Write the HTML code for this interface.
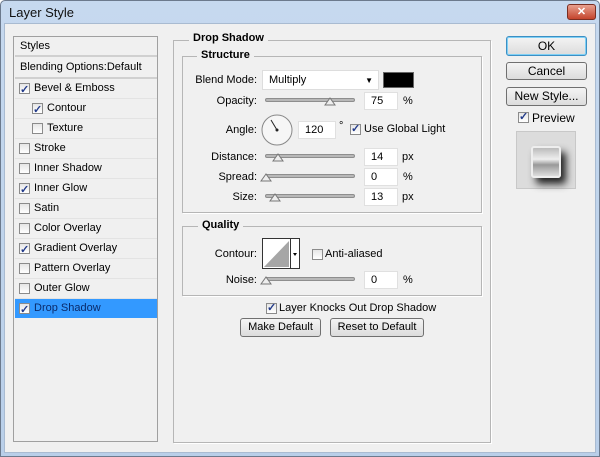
<!DOCTYPE html><html><head><style>
*{box-sizing:border-box}
body{margin:0;width:600px;height:457px;overflow:hidden;background:#fff;font-family:"Liberation Sans",sans-serif;font-size:11px;color:#000}
.win{position:absolute;left:0;top:0;width:600px;height:457px;background:linear-gradient(#c6d9ef,#b9cfe9);border:1px solid #6c7a8d;border-radius:5px 5px 0 0}
.body{position:absolute;left:4px;top:23px;width:592px;height:430px;background:#f0f0f0;border:1px solid #a9bbd1}
.a{position:absolute}
.title{left:8px;top:4px;font-size:13px;color:#111}
.close{left:566px;top:3px;width:29px;height:16px;background:linear-gradient(#e8a08f,#c4442c);border:1px solid #7a2e22;border-radius:3px;color:#fff;font-weight:bold;text-align:center;line-height:14px;font-size:11px}
.list{left:13px;top:36px;width:145px;height:406px;border:1px solid #a0a0a0;background:#f0f0f0}
.row{position:absolute;left:1px;width:142px;height:20px;border-bottom:1px solid #e3e3e3;line-height:19px}
.cb{position:absolute;width:11px;height:11px;border:1px solid #8b8b8b;background:linear-gradient(#e6e6e6,#fff)}
.cb.c:after{content:"✓";position:absolute;left:0;top:-3px;font-size:11px;color:#223a8a;font-weight:bold}
.grp{border:1px solid #b6b6b6;box-shadow:1px 1px 0 #fff}
.lg{position:absolute;background:#f0f0f0;font-weight:bold;padding:0 4px;font-size:11px}
.inp{position:absolute;background:#fff;border:1px solid #e0e0e0;height:18px;line-height:17px;padding-left:6px}
.trk{position:absolute;height:4px;border:1px solid #8e8e8e;background:#b8b8b8;border-radius:2px}
.btn{position:absolute;border:1px solid #707070;border-radius:3px;background:linear-gradient(#f4f4f4,#dcdcdc);text-align:center;font-size:12px;line-height:17px}
.lb{position:absolute;left:180px;width:77px;text-align:right;white-space:nowrap}
</style></head><body>
<div class="win"><div class="a title">Layer Style</div><div class="a close">✕</div></div>
<div class="body"></div>
<div class="a list">
<div class="row" style="top:0;height:20px;padding-left:5px;border-bottom:2px solid #d0d0d0">Styles</div>
<div class="row" style="top:20px;height:22px;padding-left:5px;line-height:20px;border-bottom:2px solid #d0d0d0">Blending Options:Default</div>
<div class="row" style="top:42px"><span class="cb c" style="left:4px;top:4px"></span><span style="position:absolute;left:19px">Bevel &amp; Emboss</span></div>
<div class="row" style="top:62px"><span class="cb c" style="left:17px;top:4px"></span><span style="position:absolute;left:32px">Contour</span></div>
<div class="row" style="top:82px"><span class="cb" style="left:17px;top:4px"></span><span style="position:absolute;left:32px">Texture</span></div>
<div class="row" style="top:102px"><span class="cb" style="left:4px;top:4px"></span><span style="position:absolute;left:19px">Stroke</span></div>
<div class="row" style="top:122px"><span class="cb" style="left:4px;top:4px"></span><span style="position:absolute;left:19px">Inner Shadow</span></div>
<div class="row" style="top:142px"><span class="cb c" style="left:4px;top:4px"></span><span style="position:absolute;left:19px">Inner Glow</span></div>
<div class="row" style="top:162px"><span class="cb" style="left:4px;top:4px"></span><span style="position:absolute;left:19px">Satin</span></div>
<div class="row" style="top:182px"><span class="cb" style="left:4px;top:4px"></span><span style="position:absolute;left:19px">Color Overlay</span></div>
<div class="row" style="top:202px"><span class="cb c" style="left:4px;top:4px"></span><span style="position:absolute;left:19px">Gradient Overlay</span></div>
<div class="row" style="top:222px"><span class="cb" style="left:4px;top:4px"></span><span style="position:absolute;left:19px">Pattern Overlay</span></div>
<div class="row" style="top:242px"><span class="cb" style="left:4px;top:4px"></span><span style="position:absolute;left:19px">Outer Glow</span></div>
<div class="row" style="top:262px;background:#3399ff;color:#0a2a6a;border:none;height:19px"><span class="cb c" style="left:4px;top:4px"></span><span style="position:absolute;left:19px">Drop Shadow</span></div>
</div>

<div class="a grp" style="left:173px;top:40px;width:318px;height:403px"></div>
<div class="lg" style="left:189px;top:32px">Drop Shadow</div>
<div class="a grp" style="left:182px;top:56px;width:300px;height:157px"></div>
<div class="lg" style="left:197px;top:49px">Structure</div>

<div class="lb" style="top:74px">Blend Mode:</div>
<div class="inp" style="left:262px;top:70px;width:117px;height:20px;line-height:19px;border-color:#ddd">Multiply<span style="position:absolute;right:5px;top:0;font-size:8px">▼</span></div>
<div class="a" style="left:383px;top:72px;width:31px;height:16px;background:#000;border:1px solid #666"></div>

<div class="lb" style="top:95px">Opacity:</div>
<div class="trk" style="left:265px;top:98px;width:90px"></div>
<svg class="a" style="left:324px;top:96px" width="12" height="10"><path d="M1 9 L6 2 L11 9 Z" fill="#eee" stroke="#777"/></svg>
<div class="inp" style="left:364px;top:92px;width:34px">75</div><div class="a" style="left:403px;top:95px">%</div>

<div class="lb" style="top:124px">Angle:</div>
<svg class="a" style="left:261px;top:114px" width="32" height="32"><circle cx="16" cy="16" r="15" fill="#f6f6f6" stroke="#888"/><path d="M16 16 L10 6" stroke="#222" stroke-width="1"/><circle cx="16" cy="16" r="1.5" fill="#222"/></svg>
<div class="inp" style="left:298px;top:121px;width:38px">120</div><div class="a" style="left:339px;top:120px">°</div>
<span class="cb c a" style="left:350px;top:124px"></span><div class="a" style="left:364px;top:123px">Use Global Light</div>

<div class="lb" style="top:151px">Distance:</div>
<div class="trk" style="left:265px;top:154px;width:90px"></div>
<svg class="a" style="left:272px;top:152px" width="12" height="10"><path d="M1 9 L6 2 L11 9 Z" fill="#eee" stroke="#777"/></svg>
<div class="inp" style="left:364px;top:148px;width:34px">14</div><div class="a" style="left:402px;top:151px">px</div>

<div class="lb" style="top:171px">Spread:</div>
<div class="trk" style="left:265px;top:174px;width:90px"></div>
<svg class="a" style="left:260px;top:172px" width="12" height="10"><path d="M1 9 L6 2 L11 9 Z" fill="#eee" stroke="#777"/></svg>
<div class="inp" style="left:364px;top:168px;width:34px">0</div><div class="a" style="left:403px;top:171px">%</div>

<div class="lb" style="top:191px">Size:</div>
<div class="trk" style="left:265px;top:194px;width:90px"></div>
<svg class="a" style="left:269px;top:192px" width="12" height="10"><path d="M1 9 L6 2 L11 9 Z" fill="#eee" stroke="#777"/></svg>
<div class="inp" style="left:364px;top:188px;width:34px">13</div><div class="a" style="left:402px;top:191px">px</div>

<div class="a grp" style="left:182px;top:226px;width:300px;height:70px"></div>
<div class="lg" style="left:198px;top:219px">Quality</div>
<div class="lb" style="top:248px">Contour:</div>
<svg class="a" style="left:262px;top:238px" width="38" height="31"><rect x="0.5" y="0.5" width="28" height="30" fill="#fff" stroke="#333"/><path d="M2 29 L27 3 L27 29 Z" fill="#a6a6a6"/><rect x="28.5" y="0.5" width="9" height="30" fill="#fff" stroke="#333"/><path d="M31 15 L35 15 L33 18 Z" fill="#000"/></svg>
<span class="cb a" style="left:312px;top:249px"></span><div class="a" style="left:325px;top:248px">Anti-aliased</div>
<div class="lb" style="top:274px">Noise:</div>
<div class="trk" style="left:265px;top:277px;width:90px"></div>
<svg class="a" style="left:260px;top:275px" width="12" height="10"><path d="M1 9 L6 2 L11 9 Z" fill="#eee" stroke="#777"/></svg>
<div class="inp" style="left:364px;top:271px;width:34px">0</div><div class="a" style="left:403px;top:274px">%</div>

<span class="cb c a" style="left:266px;top:303px"></span><div class="a" style="left:279px;top:302px">Layer Knocks Out Drop Shadow</div>
<div class="btn" style="left:240px;top:318px;width:81px;height:19px;font-size:11px">Make Default</div>
<div class="btn" style="left:330px;top:318px;width:94px;height:19px;font-size:11px">Reset to Default</div>

<div class="btn" style="left:506px;top:36px;width:81px;height:20px;border-color:#3c8fc4;box-shadow:inset 0 0 0 1px #7fd0f5;line-height:18px">OK</div>
<div class="btn" style="left:506px;top:62px;width:81px;height:18px;line-height:16px">Cancel</div>
<div class="btn" style="left:506px;top:87px;width:81px;height:19px">New Style...</div>
<span class="cb c a" style="left:518px;top:112px"></span><div class="a" style="left:532px;top:111px;font-size:12px">Preview</div>
<div class="a" style="left:516px;top:131px;width:60px;height:58px;background:#dcdcdc;border:1px solid #c8c8c8"></div>
<div class="a" style="left:531px;top:146px;width:30px;height:32px;border-radius:3px;box-shadow:5px 6px 8px #222;background:linear-gradient(#bbb,#eee 40%,#999 60%,#ddd);border:2px solid #eee"></div>
</body></html>
